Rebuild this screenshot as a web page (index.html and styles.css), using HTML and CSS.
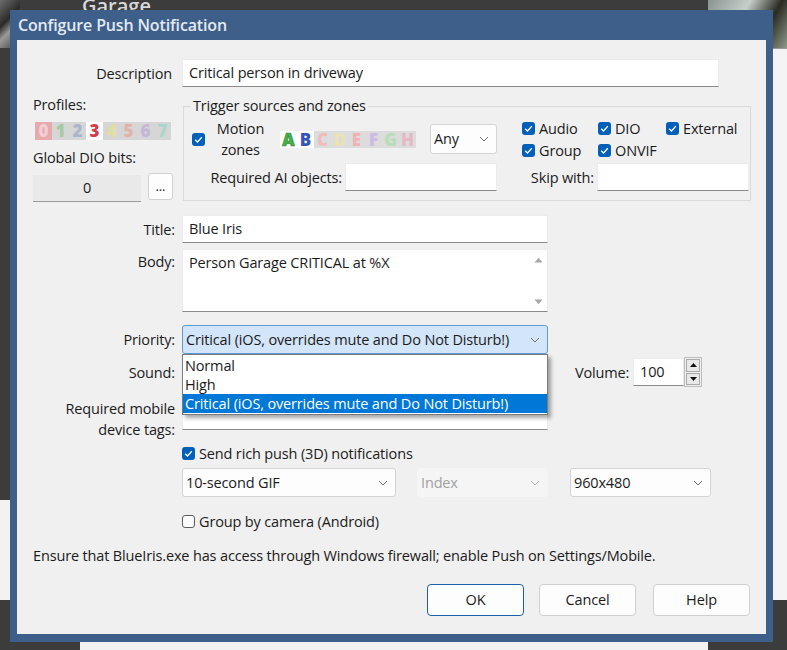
FILE: index.html
```html
<!DOCTYPE html>
<html>
<head>
<meta charset="utf-8">
<title>Configure Push Notification</title>
<link rel="stylesheet" href="styles.css">
</head>
<body>
<div class="desktop">
  <div class="bg-top"><span class="bg-garage">Garage</span></div>
  <div class="bg-photo-tl"></div>
  <div class="bg-photo-tr"></div>
  <div class="bg-right"></div>
  <div class="bg-left"></div>
  <div class="bg-bottom"></div>

  <div class="dialog">
    <div class="titlebar">Configure Push Notification</div>
    <div class="client">

      <div class="row row-desc">
        <div class="lbl lbl-desc">Description</div>
        <div class="field f-desc">Critical person in driveway</div>
      </div>

      <div class="row row-top">
        <div class="left-block">
          <div class="small-lbl">Profiles:</div>
          <div class="digits">
            <span class="cell p0">0</span><span class="cell p1">1</span><span class="cell p2">2</span><span class="cell p3">3</span><span class="cell p4">4</span><span class="cell p5">5</span><span class="cell p6">6</span><span class="cell p7">7</span>
          </div>
          <div class="small-lbl lbl-dio">Global DIO bits:</div>
          <div class="dio-row">
            <div class="dio-btn">0</div>
            <div class="dots-btn">...</div>
          </div>
        </div>

        <fieldset class="group">
          <legend>Trigger sources and zones</legend>
          <div class="grp-row1">
            <span class="cb on"><svg viewBox="0 0 13 13"><path d="M3.2 6.8 L5.5 9 L9.8 4.3" fill="none" stroke="#fff" stroke-width="1.3"/></svg></span>
            <div class="motion-lbl">Motion<br>zones</div>
            <div class="zones">
              <span class="zc z-a">A</span><span class="zc z-b">B</span><span class="zc z-c">C</span><span class="zc z-d">D</span><span class="zc z-e">E</span><span class="zc z-f">F</span><span class="zc z-g">G</span><span class="zc z-h">H</span>
            </div>
            <div class="select sel-any"><span>Any</span><svg class="chev" viewBox="0 0 10 6"><path d="M1 1 L5 5 L9 1" fill="none" stroke="#707070" stroke-width="1"/></svg></div>
            <div class="cb-grid">
              <div class="cbi"><span class="cb on"><svg viewBox="0 0 13 13"><path d="M3.2 6.8 L5.5 9 L9.8 4.3" fill="none" stroke="#fff" stroke-width="1.3"/></svg></span>Audio</div>
              <div class="cbi"><span class="cb on"><svg viewBox="0 0 13 13"><path d="M3.2 6.8 L5.5 9 L9.8 4.3" fill="none" stroke="#fff" stroke-width="1.3"/></svg></span>DIO</div>
              <div class="cbi"><span class="cb on"><svg viewBox="0 0 13 13"><path d="M3.2 6.8 L5.5 9 L9.8 4.3" fill="none" stroke="#fff" stroke-width="1.3"/></svg></span>External</div>
              <div class="cbi"><span class="cb on"><svg viewBox="0 0 13 13"><path d="M3.2 6.8 L5.5 9 L9.8 4.3" fill="none" stroke="#fff" stroke-width="1.3"/></svg></span>Group</div>
              <div class="cbi"><span class="cb on"><svg viewBox="0 0 13 13"><path d="M3.2 6.8 L5.5 9 L9.8 4.3" fill="none" stroke="#fff" stroke-width="1.3"/></svg></span>ONVIF</div>
            </div>
          </div>
          <div class="grp-row2">
            <div class="lbl-ai">Required AI objects:</div>
            <div class="field f-ai"></div>
            <div class="lbl-skip">Skip with:</div>
            <div class="field f-skip"></div>
          </div>
        </fieldset>
      </div>

      <div class="row row-title">
        <div class="lbl">Title:</div>
        <div class="field f-mid">Blue Iris</div>
      </div>

      <div class="row row-body">
        <div class="lbl">Body:</div>
        <div class="field f-body">
          <div class="body-text">Person Garage CRITICAL at %X</div>
          <div class="vscroll">
            <svg viewBox="0 0 9 6"><path d="M0.5 5.5 L4.5 0.8 L8.5 5.5 Z" fill="#a8a8a8"/></svg>
            <svg viewBox="0 0 9 6"><path d="M0.5 0.5 L4.5 5.2 L8.5 0.5 Z" fill="#a8a8a8"/></svg>
          </div>
        </div>
      </div>

      <div class="row row-prio">
        <div class="lbl">Priority:</div>
        <div class="prio-wrap">
          <div class="select sel-prio"><span>Critical (iOS, overrides mute and Do Not Disturb!)</span><svg class="chev" viewBox="0 0 10 6"><path d="M1 1 L5 5 L9 1" fill="none" stroke="#707070" stroke-width="1"/></svg></div>
          <div class="popup">
            <div class="opt">Normal</div>
            <div class="opt">High</div>
            <div class="opt sel">Critical (iOS, overrides mute and Do Not Disturb!)</div>
          </div>
        </div>
      </div>

      <div class="row row-sound">
        <div class="lbl">Sound:</div>
        <div class="select sel-sound"></div>
        <div class="lbl-vol">Volume:</div>
        <div class="field f-vol">100</div>
        <div class="spin">
          <div class="spin-btn"><svg viewBox="0 0 7 4"><path d="M0 4 L3.5 0 L7 4 Z" fill="#111"/></svg></div>
          <div class="spin-btn"><svg viewBox="0 0 7 4"><path d="M0 0 L3.5 4 L7 0 Z" fill="#111"/></svg></div>
        </div>
      </div>

      <div class="row row-tags">
        <div class="lbl lbl-tags">Required mobile<br>device tags:</div>
        <div class="field f-mid"></div>
      </div>

      <div class="row row-rich">
        <div class="cbi"><span class="cb on"><svg viewBox="0 0 13 13"><path d="M3.2 6.8 L5.5 9 L9.8 4.3" fill="none" stroke="#fff" stroke-width="1.3"/></svg></span>Send rich push (3D) notifications</div>
      </div>

      <div class="row row-drops">
        <div class="select sel-gif"><span>10-second GIF</span><svg class="chev" viewBox="0 0 10 6"><path d="M1 1 L5 5 L9 1" fill="none" stroke="#707070" stroke-width="1"/></svg></div>
        <div class="select sel-index disabled"><span>Index</span><svg class="chev" viewBox="0 0 10 6"><path d="M1 1 L5 5 L9 1" fill="none" stroke="#b8b8b8" stroke-width="1"/></svg></div>
        <div class="select sel-res"><span>960x480</span><svg class="chev" viewBox="0 0 10 6"><path d="M1 1 L5 5 L9 1" fill="none" stroke="#707070" stroke-width="1"/></svg></div>
      </div>

      <div class="row row-grp">
        <div class="cbi"><span class="cb off"></span>Group by camera (Android)</div>
      </div>

      <div class="row row-note">Ensure that BlueIris.exe has access through Windows firewall; enable Push on Settings/Mobile.</div>

      <div class="row row-btns">
        <div class="btn btn-ok">OK</div>
        <div class="btn">Cancel</div>
        <div class="btn btn-help">Help</div>
      </div>

    </div>
  </div>
</div>
</body>
</html>
```
FILE: styles.css
```css
* { box-sizing: border-box; }
html, body { margin: 0; padding: 0; }
body {
  width: 787px; height: 650px; overflow: hidden;
  background: #3b3b3b;
  font-family: "Open Sans", "Noto Sans", sans-serif;
  font-size: 14.5px;
  letter-spacing: -0.15px;
  color: #1b1b1b;
}
.desktop { position: relative; width: 787px; height: 650px; overflow: hidden; background: #3c3c3c; }

/* backdrop pieces (other windows on the desktop) */
.bg-top { position: absolute; left: 0; top: 0; width: 787px; height: 10px; overflow: hidden; }
.bg-garage { position: absolute; left: 82px; top: -6px; font-size: 20px; line-height: 24px; color: #d8d8d8; font-weight: 600; letter-spacing: 0; }
.bg-photo-tl { position: absolute; left: 0; top: 0; width: 20px; height: 48px; background: linear-gradient(135deg, #6d6d6d, #2a2a2a 40%, #9a9a9a 60%, #3a3a3a); }
.bg-photo-tr { position: absolute; left: 708px; top: 0; width: 79px; height: 48px; background: linear-gradient(120deg, #8a9390, #c7cfcb 40%, #2a2a22 70%, #8e9a8a); }
.bg-right { position: absolute; left: 773px; top: 48px; width: 14px; height: 552px; background: #f4f4f4; border-top: 1px solid #999; }
.bg-left { position: absolute; left: 0; top: 500px; width: 10px; height: 100px; background: #f2f2f2; }
.bg-bottom { position: absolute; left: 80px; top: 640px; width: 628px; height: 10px; background: #f2f2f2; }

/* dialog window */
.dialog {
  position: absolute; left: 10px; top: 10px; width: 763px; height: 632px;
  background: #3e5f8a;
  padding: 0 7px 8px 7px;
  display: flex; flex-direction: column;
}
.titlebar {
  height: 30px; line-height: 30px; padding-left: 1px;
  color: #e3eaf2; font-size: 16px; font-weight: 600; letter-spacing: -0.15px;
}
.client {
  flex: 1; background: #f0f0f0;
  display: flex; flex-direction: column;
}

.row { display: flex; align-items: center; }
.lbl { width: 158px; text-align: right; margin-right: 7px; flex: none; }
.lbl-desc { padding-right: 3px; }

.field {
  background: #fff; border: 1px solid #ececec; border-bottom-color: #8a8a8a;
  height: 28px; line-height: 26px; padding-left: 6px; flex: none;
}

.row-desc { margin-top: 19px; }
.f-desc { width: 537px; }

/* top section */
.row-top { margin-top: 11px; align-items: flex-start; height: 103px; }
.left-block { width: 166px; padding-left: 16px; flex: none; }
.small-lbl { line-height: 20px; margin-top: -3px; }
.digits { display: flex; margin-top: 7px; margin-left: 2px; height: 18px; }
.cell {
  width: 17px; height: 18px; line-height: 18px; text-align: center;
  font-size: 17px; font-weight: 800; background: #d6d6d6; letter-spacing: 0;
}
.p0 { background: #e6a9ad; color: #f3cdd0; }
.p1 { color: #a7c9a2; }
.p2 { color: #aab6cc; }
.p3 { background: #fff; color: #d23e4d; }
.p4 { color: #e2dea0; }
.p5 { color: #dfb4a6; }
.p6 { color: #c6b6d6; }
.p7 { color: #a9d6cc; }
.lbl-dio { margin-top: 8px; }
.dio-row { display: flex; align-items: flex-start; margin-top: 5px; }
.dio-btn {
  width: 108px; height: 27px; margin-top: 2px; line-height: 26px; text-align: center;
  background: #e9e9e9; border-bottom: 1px solid #9a9a9a;
}
.dots-btn {
  width: 25px; height: 27px; margin-left: 7px; text-align: center; line-height: 24px;
  background: #fdfdfd; border: 1px solid #d2d2d2; border-radius: 3px; font-size: 13px;
}

.group {
  margin: 0; padding: 0; min-width: 0;
  width: 568px; height: 103px;
  border: 1px solid #dadada;
}
.group legend { padding: 0 2px; margin-left: 7px; line-height: 16px; }
.grp-row1 { display: flex; align-items: center; height: 42px; margin-top: 4px; }
.cb {
  width: 13px; height: 13px; border-radius: 3px; flex: none; display: inline-block;
}
.cb svg { display: block; width: 13px; height: 13px; }
.cb.on { background: #005fb8; }
.cb.off { background: #fbfbfb; border: 1px solid #5f5f5f; }
.grp-row1 > .cb { margin-left: 8px; }
.motion-lbl { width: 59px; margin-left: 6px; text-align: center; line-height: 21px; }
.zones { display: flex; margin-left: 10px; height: 17px; }
.zc {
  width: 17px; height: 17px; line-height: 17px; text-align: center;
  font-size: 17px; font-weight: 800; background: #dcdcdc; letter-spacing: 0;
}
.z-a { background: #fff; color: #48b048; -webkit-text-stroke: 0.6px #2e8a2e; }
.z-b { background: #fff; color: #3553b8; }
.z-c { color: #f0bcbc; }
.z-d { color: #ebe2b2; }
.z-e { color: #efb3b3; }
.z-f { color: #cbbbe6; }
.z-g { color: #b9dcb9; }
.z-h { color: #e6b8c6; }

.select {
  position: relative; flex: none;
  background: #fdfdfd; border: 1px solid #d4d4d4; border-radius: 3px;
  height: 29px; line-height: 27px; padding-left: 3px;
}
.select .chev { position: absolute; right: 7px; top: 11px; width: 10px; height: 6px; }
.sel-any { width: 67px; margin-left: 14px; height: 30px; padding-left: 3px; }
.cb-grid {
  margin-left: 25px;
  display: grid; grid-template-columns: 76px 68px auto; grid-auto-rows: 22px;
}
.cbi { display: flex; align-items: center; }
.cbi .cb { margin-right: 4px; }

.grp-row2 { display: flex; align-items: center; margin-top: 3px; height: 28px; }
.lbl-ai { width: 158px; text-align: right; margin-right: 3px; }
.f-ai { width: 152px; }
.lbl-skip { width: 97px; text-align: right; margin-right: 3px; }
.f-skip { width: 152px; }

.row-title { margin-top: 14px; }
.f-mid { width: 366px; }
.row-body { margin-top: 6px; align-items: flex-start; }
.row-body .lbl { line-height: 26px; }
.f-body { width: 366px; height: 63px; display: flex; padding-left: 6px; }
.body-text { flex: 1; line-height: 26px; }
.vscroll { width: 17px; display: flex; flex-direction: column; justify-content: space-between; align-items: center; padding: 7px 0 6px; }
.vscroll svg { width: 9px; height: 6px; display: block; }

.row-prio { margin-top: 13px; }
.prio-wrap { position: relative; }
.sel-prio {
  width: 366px; background: #d3e5f8; border-color: #5d9ad6;
}
.popup {
  position: absolute; left: 0; top: 29px; width: 366px; z-index: 5;
  background: #fff; border: 1px solid #7a7a7a;
  box-shadow: 3px 3px 4px rgba(0,0,0,0.35);
  padding: 1px 0;
}
.opt { height: 19px; line-height: 19px; padding-left: 2px; }
.opt.sel { background: #0078d7; color: #fff; }

.row-sound { margin-top: 4px; height: 28px; }
.sel-sound { width: 366px; height: 28px; }
.lbl-vol { margin-left: 27px; width: 53px; }
.f-vol { width: 51px; margin-left: 5px; }
.spin {
  width: 18px; height: 30px; border: 1px solid #bdbdbd; padding: 1px;
  display: flex; flex-direction: column; gap: 1px; background: #f0f0f0;
}
.spin-btn { flex: 1; background: #e9e9e9; border: 1px solid #a9a9a9; display: flex; align-items: center; justify-content: center; }
.spin-btn svg { width: 7px; height: 4px; display: block; }

.row-tags { margin-top: 16px; align-items: flex-start; }
.lbl-tags { line-height: 21px; margin-top: -4px; margin-bottom: -10px; }

.row-rich { margin-top: 13px; height: 20px; padding-left: 165px; }
.row-drops { margin-top: 5px; padding-left: 165px; }
.sel-gif { width: 214px; }
.sel-index { width: 131px; margin-left: 21px; }
.sel-index.disabled { background: #f5f5f5; border-color: #f5f5f5; color: #a0a0a0; }
.sel-res { width: 141px; margin-left: 22px; }
.row-grp { margin-top: 14px; height: 20px; padding-left: 165px; }
.row-note { margin-top: 14px; height: 20px; padding-left: 16px; }

.row-btns { margin-top: 19px; padding-left: 410px; gap: 15px; }
.btn {
  width: 97px; height: 32px; line-height: 30px; text-align: center;
  background: #fdfdfd; border: 1px solid #d0d0d0; border-radius: 4px;
}
.btn-ok { border-color: #1e5fa8; }
.btn-help { margin-left: 2px; }
```
